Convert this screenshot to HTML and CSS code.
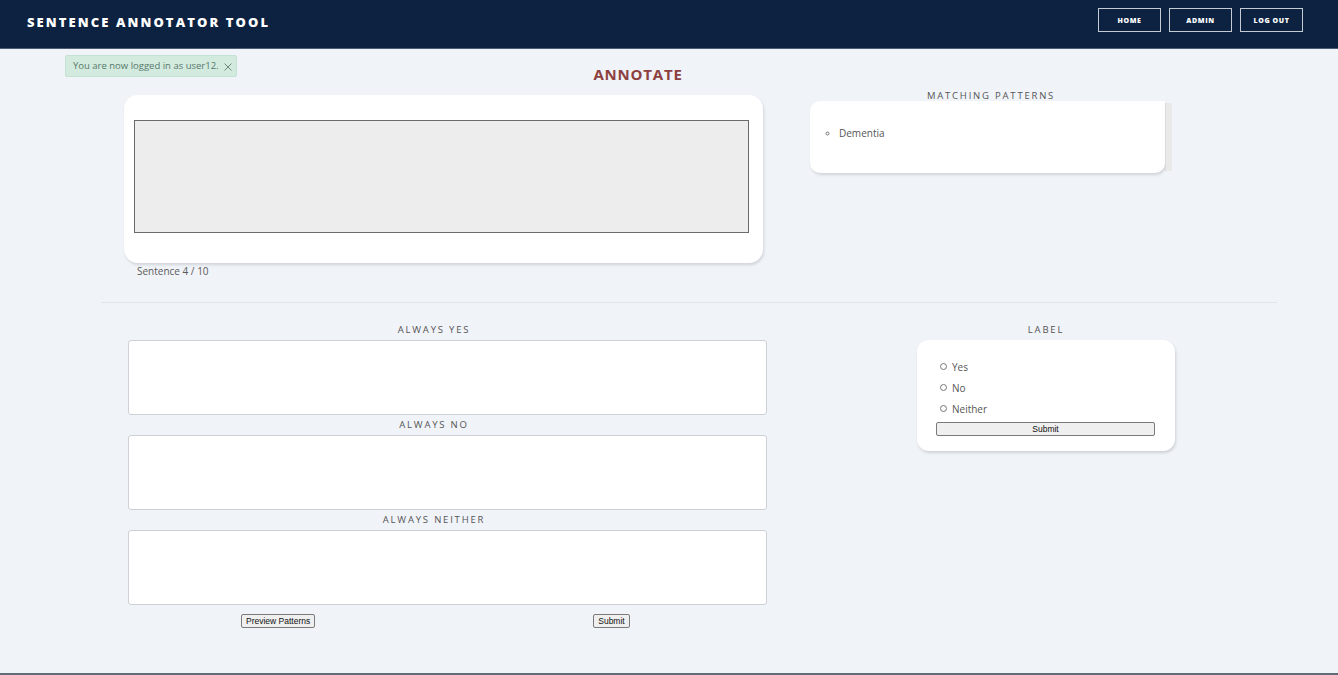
FILE: index.html
```html
<!DOCTYPE html>
<html lang="en">
<head>
<meta charset="utf-8">
<title>Sentence Annotator Tool</title>
<link rel="stylesheet" href="styles.css">
</head>
<body>
<header class="navbar">
  <div class="brand">SENTENCE ANNOTATOR TOOL</div>
  <nav class="nav-links">
    <a class="nav-btn" href="#">HOME</a>
    <a class="nav-btn" href="#">ADMIN</a>
    <a class="nav-btn" href="#">LOG OUT</a>
  </nav>
</header>
<main class="page">
  <div class="alert">You are now logged in as user12.
    <svg class="alert-close" width="8" height="8" viewBox="0 0 8 8"><path d="M0.5 0.5 L7.5 7.5 M7.5 0.5 L0.5 7.5" stroke="#6f8a7d" stroke-width="1" fill="none"/></svg>
  </div>
  <h1 class="title">ANNOTATE</h1>
  <section class="top-row">
    <div class="sentence-col">
      <div class="sentence-card">
        <div class="sentence-box"></div>
      </div>
      <div class="sentence-count">Sentence 4 / 10</div>
    </div>
    <div class="patterns-col">
      <div class="section-label">MATCHING PATTERNS</div>
      <div class="patterns-wrap">
        <div class="patterns-box">
          <ul class="patterns-list">
            <li>Dementia</li>
          </ul>
        </div>
        <div class="scroll-track"></div>
      </div>
    </div>
  </section>
  <hr class="divider">
  <section class="bottom-row">
    <div class="rules-col">
      <div class="section-label">ALWAYS YES</div>
      <textarea class="rule-area"></textarea>
      <div class="section-label">ALWAYS NO</div>
      <textarea class="rule-area"></textarea>
      <div class="section-label">ALWAYS NEITHER</div>
      <textarea class="rule-area"></textarea>
      <div class="rule-buttons">
        <button class="btn">Preview Patterns</button>
        <button class="btn">Submit</button>
      </div>
    </div>
    <div class="label-col">
      <div class="section-label">LABEL</div>
      <form class="label-card">
        <label class="radio-row"><input type="radio" name="label" class="radio"> Yes</label>
        <label class="radio-row"><input type="radio" name="label" class="radio"> No</label>
        <label class="radio-row"><input type="radio" name="label" class="radio"> Neither</label>
        <button type="button" class="btn btn-block">Submit</button>
      </form>
    </div>
  </section>
</main>
<footer class="footer"></footer>
</body>
</html>
```
FILE: styles.css
```css
* { box-sizing: border-box; }
html, body { margin: 0; padding: 0; }
body {
  background: #f0f3f8;
  font-family: "Open Sans", "Liberation Sans", sans-serif;
  color: #555;
}
.navbar {
  height: 49px;
  background: #0c2240;
  border-bottom: 1px solid #4a5b73;
  display: flex;
  align-items: center;
  justify-content: space-between;
  padding: 0 35px 0 27px;
}
.brand {
  color: #fff;
  font-weight: 800;
  font-size: 13px;
  letter-spacing: 2.1px;
  margin-top: -4px;
}
.nav-links {
  display: flex;
  gap: 8px;
  margin-top: -8px;
}
.nav-btn {
  width: 63px;
  height: 24px;
  border: 1px solid #c5cbd3;
  color: #fff;
  font-size: 7px;
  font-weight: 800;
  letter-spacing: 0.6px;
  text-decoration: none;
  display: flex;
  align-items: center;
  justify-content: center;
}
.page {
  position: relative;
  padding-left: 101px;
  height: 624px;
}
.alert {
  position: absolute;
  left: 65px;
  top: 6px;
  width: 172px;
  height: 22px;
  background: #d3eadf;
  border: 1px solid #c4e1d3;
  border-radius: 2px;
  color: #56796a;
  font-size: 9.5px;
  line-height: 20px;
  padding-left: 7px;
  white-space: nowrap;
  display: flex;
  align-items: center;
}
.alert-close {
  margin-left: 5px;
  margin-top: 1px;
}
.title {
  margin: 0;
  padding-top: 15px;
  width: 1074px;
  text-align: center;
  font-size: 15px;
  line-height: 20px;
  font-weight: 700;
  letter-spacing: 0.8px;
  color: #8d4040;
}
.top-row {
  display: flex;
  align-items: flex-start;
  margin-top: 3px;
}
.sentence-col {
  margin-left: 23px;
  width: 639px;
  padding-top: 8px;
}
.sentence-card {
  background: #fff;
  border-radius: 14px;
  box-shadow: 1px 2px 3px rgba(0,0,0,0.13);
  padding: 25px 14px 30px 10px;
}
.sentence-box {
  height: 113px;
  background: #ededed;
  border: 1px solid #6a6a6a;
}
.sentence-count {
  font-size: 10px;
  line-height: 16px;
  padding-left: 13px;
  color: #5a5a5a;
}
.section-label {
  font-size: 9.5px;
  line-height: 16px;
  letter-spacing: 1.8px;
  text-align: center;
  color: #555;
}
.patterns-col {
  margin-left: 47px;
  width: 362px;
  padding-top: 1px;
}
.patterns-wrap {
  display: flex;
  margin-top: -3px;
}
.patterns-box {
  flex: 1;
  height: 72px;
  background: #fff;
  border-radius: 10px 0 10px 10px;
  box-shadow: 1px 2px 3px rgba(0,0,0,0.13);
  padding-top: 25px;
}
.scroll-track {
  width: 7px;
  height: 68px;
  margin-top: 2px;
  background: #e9e9ea;
  border-left: 1px solid #dcdcdc;
}
.patterns-list {
  margin: 0;
  padding-left: 29px;
  list-style: circle;
  font-size: 10px;
  line-height: 14px;
  color: #555;
}
.patterns-list li::marker { font-size: 8px; color: #777; }
.divider {
  margin: 23px 0 16px 0;
  width: 1176px;
  border: 0;
  border-top: 1px solid #e1e5eb;
  height: 0;
}
.bottom-row {
  display: flex;
  align-items: flex-start;
}
.rules-col {
  width: 666px;
}
.rules-col .section-label {
  line-height: 18px;
  margin: 1px 0 1px;
}
.rules-col .section-label:first-child { margin-top: 2px; }
.rule-area {
  display: block;
  margin-left: 27px;
  width: 639px;
  height: 75px;
  border: 1px solid #cdd0d4;
  border-radius: 3px;
  background: #fff;
  resize: none;
}
.rule-buttons {
  display: flex;
  padding-left: 140px;
  margin-top: 9px;
  gap: 278px;
}
.btn {
  font-family: "Liberation Sans", Arial, sans-serif;
  font-size: 8.5px;
  height: 14px;
  line-height: 12px;
  padding: 0 4px;
  background: #efefef;
  border: 1px solid #7a7a7a;
  border-radius: 2px;
  color: #111;
}
.label-col {
  margin-left: 150px;
  width: 258px;
}
.label-col .section-label {
  line-height: 18px;
  margin-top: 2px;
  margin-bottom: 1px;
}
.label-card {
  background: #fff;
  border-radius: 12px;
  box-shadow: 1px 2px 3px rgba(0,0,0,0.14);
  padding: 16px 20px 15px 19px;
  display: flex;
  flex-direction: column;
}
.radio-row {
  display: flex;
  align-items: center;
  height: 21px;
  font-size: 10px;
  color: #555;
  padding-left: 4px;
}
.radio {
  appearance: none;
  -webkit-appearance: none;
  width: 7px;
  height: 7px;
  border: 1px solid #777;
  border-radius: 50%;
  margin: 0 5px 0 0;
  background: #fff;
}
.btn-block {
  width: 100%;
  margin-top: 3px;
}
.footer {
  height: 2px;
  background: #5f6b77;
}
```
